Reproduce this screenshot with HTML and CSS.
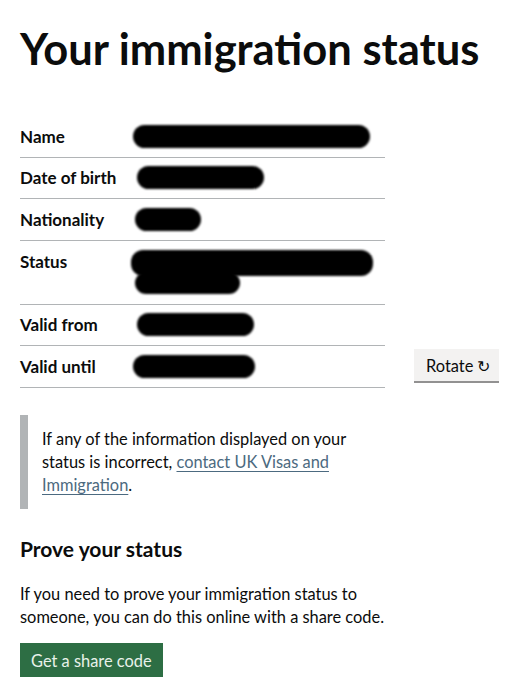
FILE: index.html
```html
<!DOCTYPE html>
<html lang="en">
<head>
  <meta charset="UTF-8">
  <meta name="viewport" content="width=device-width, initial-scale=1.0">
  <title>Your immigration status</title>
  <link rel="stylesheet" href="styles.css">
</head>
<body>
  <main class="page">
    <h1 class="title">Your immigration status</h1>

    <div class="status-wrap">
      <dl class="summary">
        <div class="row">
          <dt>Name</dt>
          <dd><span class="redact w-name"></span></dd>
        </div>
        <div class="row">
          <dt>Date of birth</dt>
          <dd><span class="redact w-dob"></span></dd>
        </div>
        <div class="row">
          <dt>Nationality</dt>
          <dd><span class="redact w-nat"></span></dd>
        </div>
        <div class="row row-tall">
          <dt>Status</dt>
          <dd>
            <span class="redact w-status"></span>
            <span class="redact w-status2"></span>
          </dd>
        </div>
        <div class="row">
          <dt>Valid from</dt>
          <dd><span class="redact w-from"></span></dd>
        </div>
        <div class="row">
          <dt>Valid until</dt>
          <dd><span class="redact w-until"></span></dd>
        </div>
      </dl>
      <button class="btn-rotate">Rotate &#x21bb;</button>
    </div>

    <div class="inset">
      If any of the information displayed on your status is incorrect, <a href="#">contact UK Visas and Immigration</a>.
    </div>

    <h2 class="subtitle">Prove your status</h2>
    <p class="body-text">If you need to prove your immigration status to someone, you can do this online with a share code.</p>
    <button class="btn-primary">Get a share code</button>
  </main>
</body>
</html>
```

FILE: styles.css
```css
* {
  margin: 0;
  padding: 0;
  box-sizing: border-box;
}

body {
  font-family: Lato, "Liberation Sans", sans-serif;
  color: #0b0c0c;
  background: #fff;
}

.page {
  padding: 23px 20px 0;
}

.title {
  font-size: 43.5px;
  line-height: 50px;
  font-weight: 700;
}

.status-wrap {
  display: flex;
  align-items: flex-end;
  margin-top: 43px;
}

.summary {
  width: 365px;
}

.row {
  display: flex;
  border-bottom: 1px solid #b1b4b6;
  padding: 10px 0 9px;
}

.row:nth-child(2),
.row:nth-child(5) {
  padding-top: 9px;
}

.row-tall {
  padding-bottom: 10px;
}

.row dt {
  width: 113px;
  font-size: 17px;
  line-height: 21px;
  font-weight: 700;
}

.row dd {
  flex: 1;
  display: flex;
  flex-direction: column;
}

.redact {
  display: block;
  height: 23px;
  margin-top: -1px;
  background: #000;
  border-radius: 12px;
  filter: blur(1px);
}

.w-name { width: 237px; }
.w-dob { width: 127px; margin-left: 4px; }
.w-nat { width: 66px; margin-left: 2px; }
.w-status { width: 242px; height: 26px; margin-left: -2px; }
.w-status2 { width: 105px; height: 22px; margin-top: -4px; margin-left: 2px; }
.w-from { width: 117px; margin-left: 4px; }
.w-until { width: 122px; }

.btn-rotate {
  margin: 0 0 7px 29px;
  padding: 6px 9px 5px 12px;
  font-family: inherit;
  font-size: 16.4px;
  line-height: 21px;
  color: #0b0c0c;
  background: #f3f2f1;
  border: none;
  border-radius: 0;
  box-shadow: 0 2px 0 #929191;
}

.inset {
  width: 365px;
  margin-top: 27px;
  padding: 12px 0 13px 14px;
  border-left: 8px solid #b1b4b6;
  font-size: 16.4px;
  line-height: 23px;
}

.inset a {
  color: #4c6a80;
  text-decoration: underline;
  text-underline-offset: 3px;
}

.subtitle {
  margin-top: 27px;
  font-size: 21px;
  line-height: 25px;
  font-weight: 700;
}

.body-text {
  margin-top: 21px;
  width: 380px;
  font-size: 16.4px;
  line-height: 23px;
}

.btn-primary {
  margin-top: 15px;
  padding: 7px 11px 6px;
  font-family: inherit;
  font-size: 16.4px;
  line-height: 21px;
  color: #e8f2ea;
  background: #2d6e44;
  border: none;
  border-radius: 0;
  box-shadow: 0 2px 0 #14301d;
}
```
